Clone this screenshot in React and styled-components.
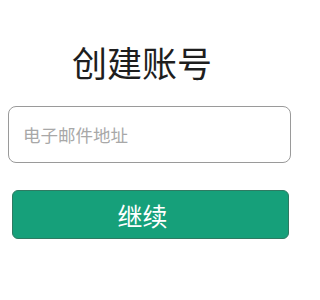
import React from "react";
import styled, { createGlobalStyle } from "styled-components";

const GlobalStyle = createGlobalStyle`
  html, body {
    margin: 0;
    padding: 0;
    background: #ffffff;
    font-family: "Noto Sans CJK SC", "Noto Sans", sans-serif;
  }
`;

const Page = styled.div`
  width: 300px;
  height: 300px;
  display: flex;
  flex-direction: column;
  box-sizing: border-box;
  padding-top: 42px;
`;

const Title = styled.h1`
  margin: 0;
  padding-right: 16px;
  text-align: center;
  font-size: 35px;
  line-height: 40px;
  font-weight: 400;
  color: #1e1e1e;
`;

const EmailInput = styled.input`
  margin: 24px 0 0 8px;
  width: 283px;
  height: 57px;
  box-sizing: border-box;
  padding: 0 0 0 14px;
  border: 1px solid #9a9a9a;
  border-radius: 8px;
  font-family: inherit;
  font-size: 17.5px;
  color: #333;
  outline: none;

  &::placeholder {
    color: #a8a8a8;
  }
`;

const ContinueButton = styled.button`
  margin: 27px 0 0 12px;
  width: 277px;
  height: 49px;
  box-sizing: border-box;
  padding: 2px 16px 0 0;
  background: #16a07a;
  border: 1px solid #2f7a62;
  border-radius: 6px;
  color: #ffffff;
  font-family: inherit;
  font-size: 25px;
  line-height: 1;
  cursor: pointer;
`;

const App = () => {
  return (
    <Page>
      <GlobalStyle />
      <Title>创建账号</Title>
      <EmailInput type="email" placeholder="电子邮件地址" />
      <ContinueButton type="button">继续</ContinueButton>
    </Page>
  );
};

export default App;
